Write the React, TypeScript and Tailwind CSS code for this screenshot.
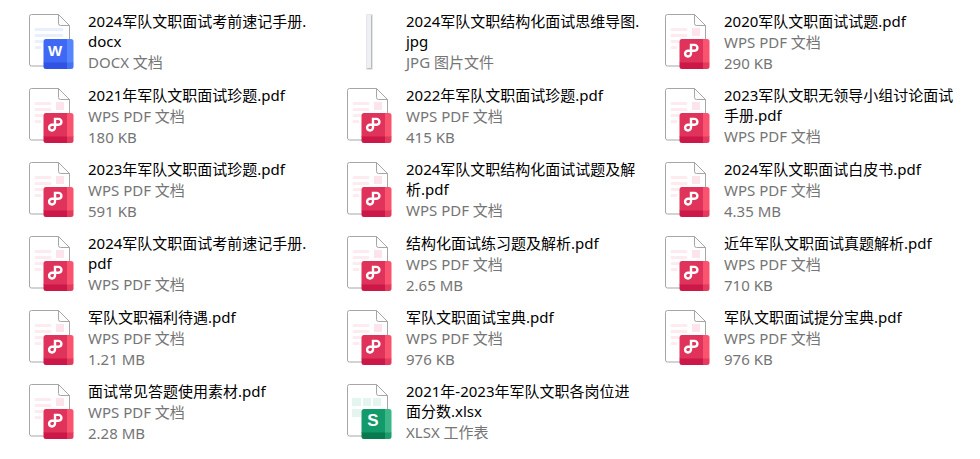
import type { ReactNode } from "react";

type FileKind = "docx" | "jpg" | "pdf" | "xlsx";

type FileItem = {
	name: string;
	kind: FileKind;
	size?: string;
};

const typeLabels: Record<FileKind, string> = {
	docx: "DOCX 文档",
	jpg: "JPG 图片文件",
	pdf: "WPS PDF 文档",
	xlsx: "XLSX 工作表",
};

const files: FileItem[] = [
	{ name: "2024军队文职面试考前速记手册", kind: "docx" },
	{ name: "2024军队文职结构化面试思维导图", kind: "jpg" },
	{ name: "2020军队文职面试试题", kind: "pdf", size: "290 KB" },
	{ name: "2021年军队文职面试珍题", kind: "pdf", size: "180 KB" },
	{ name: "2022年军队文职面试珍题", kind: "pdf", size: "415 KB" },
	{ name: "2023军队文职无领导小组讨论面试手册", kind: "pdf" },
	{ name: "2023年军队文职面试珍题", kind: "pdf", size: "591 KB" },
	{ name: "2024军队文职结构化面试试题及解析", kind: "pdf" },
	{ name: "2024军队文职面试白皮书", kind: "pdf", size: "4.35 MB" },
	{ name: "2024军队文职面试考前速记手册", kind: "pdf" },
	{ name: "结构化面试练习题及解析", kind: "pdf", size: "2.65 MB" },
	{ name: "近年军队文职面试真题解析", kind: "pdf", size: "710 KB" },
	{ name: "军队文职福利待遇", kind: "pdf", size: "1.21 MB" },
	{ name: "军队文职面试宝典", kind: "pdf", size: "976 KB" },
	{ name: "军队文职面试提分宝典", kind: "pdf", size: "976 KB" },
	{ name: "面试常见答题使用素材", kind: "pdf", size: "2.28 MB" },
	{ name: "2021年-2023年军队文职各岗位进面分数", kind: "xlsx" },
];

type DocumentIconProps = {
	body: string;
	side: string;
	bottom: string;
	corner: string;
	lines: ReactNode;
	children: ReactNode;
};

/** A sheet with a folded corner and a coloured badge on top of it */
const DocumentIcon = ({ body, side, bottom, corner, lines, children }: DocumentIconProps) => (
	<svg className="block" width="46" height="56" viewBox="0 0 46 56" aria-hidden="true">
		<path
			d="M2.5 .5H29.5L40.5 11.5V50Q40.5 52 38.5 52H2.5Q.5 52 .5 50V2.5Q.5 .5 2.5 .5Z"
			fill="#fff"
			stroke="#a6a6a6"
		/>
		<path d="M29.5 .5V9.5Q29.5 11.5 31.5 11.5H40.5Z" fill="#fcfcfc" stroke="#a6a6a6" />
		{lines}
		<path d="M17 25H38V49H14.5V27.5Q14.5 25 17 25Z" fill={body} />
		<path d="M38 25H42Q44.5 25 44.5 27.5V49H38Z" fill={side} />
		<path d="M14.5 48.5H38V55H17Q14.5 55 14.5 52.5Z" fill={bottom} />
		<path d="M38 48.5H44.5V52.5Q44.5 55 42 55H38Z" fill={corner} />
		{children}
	</svg>
);

const WordIcon = () => (
	<DocumentIcon
		body="#3f69f5"
		side="#5586ff"
		bottom="#3152e4"
		corner="#4571f4"
		lines={
			<path d="M7 15.5H33M7 21.5H33M7 27.5H13M7 33.5H11" stroke="#e9effd" strokeWidth="3" strokeLinecap="round" />
		}
	>
		<text x="26" y="42" textAnchor="middle" fill="#fff" className="font-['Liberation_Sans',sans-serif] text-[15px] font-bold">
			W
		</text>
	</DocumentIcon>
);

const PdfIcon = () => (
	<DocumentIcon
		body="#e0335b"
		side="#fa5370"
		bottom="#cb1849"
		corner="#e43a5d"
		lines={
			<>
				<path d="M7 15.5H21M7 21.5H21M7 27.5H13M7 33.5H11" stroke="#fdebf0" strokeWidth="3" strokeLinecap="round" />
				<rect x="27" y="14" width="8" height="8" fill="#fce4ea" />
			</>
		}
	>
		<path
			d="M26 39.6V30.9H29.5A2.9 2.9 0 0 1 29.5 36.7H23A2.9 2.9 0 0 0 23 42.5A2.9 2.9 0 0 0 26 39.6"
			fill="none"
			stroke="#fff"
			strokeWidth="2.4"
		/>
	</DocumentIcon>
);

const SheetIcon = () => (
	<DocumentIcon
		body="#129a6b"
		side="#3ab689"
		bottom="#087a50"
		corner="#1d9b6e"
		lines={
			<path d="M5 14H14V22H5ZM16 14H24V22H16ZM26 14H34V22H26ZM5 25H14V33H5Z" fill="#e4f4ef" />
		}
	>
		<text x="26" y="42" textAnchor="middle" fill="#fff" className="font-['Liberation_Sans',sans-serif] text-[17px] font-bold">
			S
		</text>
	</DocumentIcon>
);

/** Thumbnail of a very tall image */
const ImageThumb = () => (
	<svg className="block" width="46" height="56" viewBox="0 0 46 56" aria-hidden="true">
		<rect x="19" y="0" width="7" height="56" rx="1" fill="#e6e6e6" />
		<rect x="20" y="1" width="5" height="54" rx="1" fill="#b9babc" />
		<rect x="20" y="1" width="4" height="53" fill="#eff0f4" />
	</svg>
);

const icons: Record<FileKind, ReactNode> = {
	docx: <WordIcon />,
	jpg: <ImageThumb />,
	pdf: <PdfIcon />,
	xlsx: <SheetIcon />,
};

const FileTile = ({ file }: { file: FileItem }) => (
	<li className="flex items-start gap-[13px]">
		<div className="shrink-0 pt-[3px]">{icons[file.kind]}</div>
		<div className="min-w-0 flex-1">
			<div className="leading-5 text-black">
				{file.name}.<wbr />
				{file.kind}
			</div>
			<div className="pt-px leading-[21px] text-[#757575]">
				<div>{typeLabels[file.kind]}</div>
				{file.size && <div>{file.size}</div>}
			</div>
		</div>
	</li>
);

export default function App() {
	return (
		<main className="min-h-screen bg-white pt-[11px] pr-[19px] pb-2 pl-[29px] font-['Noto_Sans','Noto_Sans_CJK_SC',sans-serif] text-[15px]">
			<ul className="grid grid-cols-3 gap-x-[22px] gap-y-[11px]">
				{files.map((file) => (
					<FileTile key={`${file.name}.${file.kind}`} file={file} />
				))}
			</ul>
		</main>
	);
}
